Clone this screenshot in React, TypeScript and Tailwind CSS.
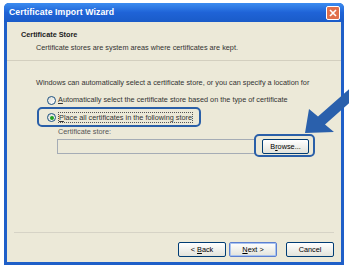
import React from "react";

const font = { fontFamily: '"Liberation Sans", Tahoma, Arial, sans-serif' };

function Radio({ checked }: { checked?: boolean }) {
  return (
    <span className="w-[9px] h-[9px] rounded-full border border-[#1c5180] bg-gradient-to-br from-[#dcdcd6] to-white flex items-center justify-center shrink-0">
      {checked && <span className="w-[4px] h-[4px] rounded-full bg-[#21a121]" />}
    </span>
  );
}

function XpButton({ children, className = "" }: { children: React.ReactNode; className?: string }) {
  return (
    <div
      className={
        "h-[15px] rounded-[2px] border border-[#003c74] bg-gradient-to-b from-white to-[#e3e3db] flex items-center justify-center text-[7.3px] leading-none text-black " +
        className
      }
    >
      {children}
    </div>
  );
}

export default function App() {
  return (
    <div className="w-[349px] h-[270px] bg-white relative overflow-hidden" style={font}>
      <div className="absolute left-[4px] top-[3px] w-[340px] h-[262px] flex flex-col rounded-t-[5px] overflow-hidden bg-[#1f5fc8]">
        {/* title bar */}
        <div className="h-[19px] flex items-center justify-between pl-[5px] pr-[4px] bg-gradient-to-b from-[#3c8cf0] via-[#1f63d7] to-[#1a5bc8]">
          <span className="text-white font-bold text-[8.7px] tracking-[0.1px]">Certificate Import Wizard</span>
          <span className="w-[14px] h-[14px] rounded-[2px] border border-white bg-[#e06f4b] flex items-center justify-center">
            <svg width="8" height="8" viewBox="0 0 8 8">
              <path d="M1 1 L7 7 M7 1 L1 7" stroke="white" strokeWidth="1.6" />
            </svg>
          </span>
        </div>
        {/* body */}
        <div className="flex-1 mx-[3px] mb-[3px] bg-[#ece9d8] flex flex-col text-[7.3px] leading-[10px] text-[#333]">
          <div className="h-[39px] shrink-0 border-b border-[#d3cfbf] pl-[14px] pt-[8px] flex flex-col gap-[3px]">
            <span className="font-bold text-[#222]">Certificate Store</span>
            <span className="pl-[15px]">Certificate stores are system areas where certificates are kept.</span>
          </div>
          <div className="flex-1 pl-[29px] pt-[17px] flex flex-col">
            <span>Windows can automatically select a certificate store, or you can specify a location for</span>
            <div className="flex items-center gap-[2px] pl-[11px] mt-[7px]">
              <Radio />
              <span><u>A</u>utomatically select the certificate store based on the type of certificate</span>
            </div>
            <div className="flex items-center gap-[2px] pl-[11px] mt-[7px]">
              <Radio checked />
              <span className="border border-dotted border-[#555] leading-[9px]"><u>P</u>lace all certificates in the following store</span>
            </div>
            <span className="pl-[22px] mt-[4px] text-[#555]">Certificate store:</span>
            <div className="flex items-center pl-[21px] mt-[2px] gap-[7px]">
              <div className="w-[198px] h-[15px] border border-[#a5acb5] bg-[#ece9d8]" />
              <XpButton className="w-[47px]">
                B<u>r</u>owse...
              </XpButton>
            </div>
          </div>
          <div className="mx-[7px] border-t border-[#d6d3c6]" />
          <div className="h-[29px] shrink-0 flex items-start pt-[9px] justify-end pr-[7px] gap-[3px]">
            <XpButton className="w-[48px]">
              &lt;&nbsp;<u>B</u>ack
            </XpButton>
            <XpButton className="w-[48px] border-[#5b7fd0] shadow-[inset_0_0_0_1px_#a9c3f0]">
              <u>N</u>ext&nbsp;&gt;
            </XpButton>
            <XpButton className="w-[48px] ml-[6px]">Cancel</XpButton>
          </div>
        </div>
      </div>
      {/* annotations */}
      <div className="absolute left-[37px] top-[107px] w-[164px] h-[20px] rounded-[5px] border-2 border-[#2a5fa8]" />
      <div className="absolute left-[254px] top-[134px] w-[61px] h-[23px] rounded-[5px] border-2 border-[#2a5fa8]" />
      <svg className="absolute left-[282px] top-[84px]" width="67" height="54" viewBox="0 0 67 54">
        <path d="M23 49 L27 25 L36 32.5 L70 2.5 L77 10.5 L43 40.5 L52 48 Z" fill="#2a60ac" />
      </svg>
    </div>
  );
}
